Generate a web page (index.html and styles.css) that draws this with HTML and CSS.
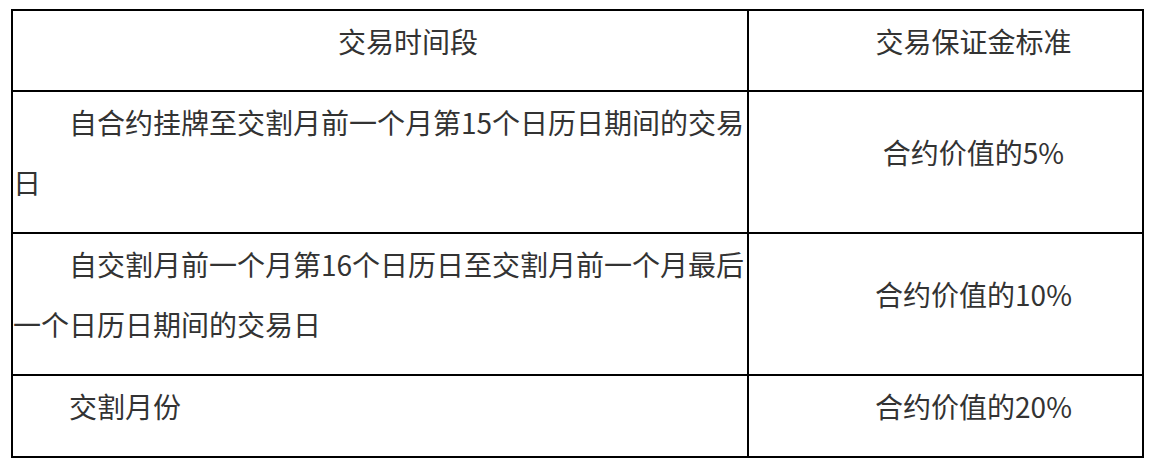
FILE: index.html
```html
<!DOCTYPE html>
<html lang="zh-CN">
<head>
<meta charset="utf-8">
<title>交易保证金标准</title>
<link rel="stylesheet" href="styles.css">
</head>
<body>
<div class="page">
  <table class="margin-table">
    <colgroup>
      <col class="col-period">
      <col class="col-rate">
    </colgroup>
    <thead>
      <tr>
        <th class="cell center"><p>交易时间段</p></th>
        <th class="cell center"><p>交易保证金标准</p></th>
      </tr>
    </thead>
    <tbody>
      <tr>
        <td class="cell left"><p>自合约挂牌至交割月前一个月第15个日历日期间的交易日</p></td>
        <td class="cell center"><p>合约价值的5%</p></td>
      </tr>
      <tr>
        <td class="cell left"><p>自交割月前一个月第16个日历日至交割月前一个月最后一个日历日期间的交易日</p></td>
        <td class="cell center"><p>合约价值的10%</p></td>
      </tr>
      <tr>
        <td class="cell left"><p>交割月份</p></td>
        <td class="cell center"><p>合约价值的20%</p></td>
      </tr>
    </tbody>
  </table>
</div>
</body>
</html>
```

FILE: styles.css
```css
html, body {
  margin: 0;
  padding: 0;
  background: #ffffff;
}

.page {
  padding: 9px 0 0 11px;
  font-family: "Noto Sans CJK SC", "Noto Sans", sans-serif;
  color: #333333;
}

.margin-table {
  border-collapse: collapse;
  table-layout: fixed;
  width: 1133px;
  border: 2px solid #000;
}

.col-period {
  width: 736px;
}

.col-rate {
  width: 395px;
}

.cell {
  border: 2px solid #000;
  padding: 0 0 20px 0;
  vertical-align: middle;
  font-weight: normal;
  font-size: 28px;
}

.cell p {
  margin: 0;
  line-height: 60px;
  text-indent: 2em;
}

.left {
  text-align: left;
}

.center {
  text-align: center;
}

thead .cell {
  padding-bottom: 19px;
}
```
